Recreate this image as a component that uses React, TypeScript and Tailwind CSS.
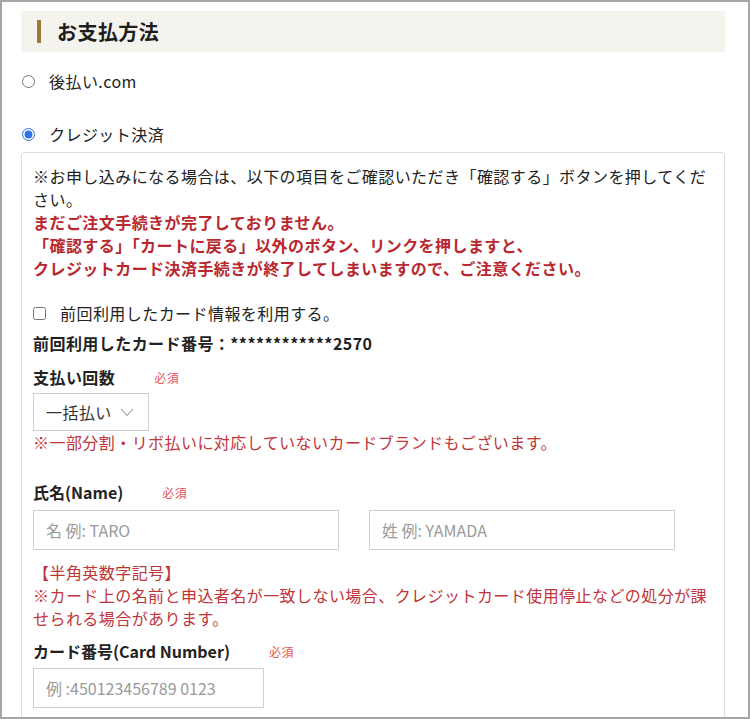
import React from "react";

const font = { fontFamily: '"Noto Sans CJK JP", "Noto Sans", sans-serif' };

function Required({ ml }: { ml: string }) {
  return <span className={`${ml} text-[12px] leading-none text-[#e0555a]`}>必須</span>;
}

export default function App() {
  return (
    <div
      className="w-[750px] h-[719px] overflow-hidden border-2 border-[#a6a6a6] bg-white text-[#222] tracking-[0.44px]"
      style={font}
    >
      <div className="pl-[19px] pr-[23px]">
        <div className="mt-[9px] h-[41px] bg-[#f5f3ee] flex items-center">
          <div className="ml-[16px] w-[4px] h-[23px] bg-[#9a7a36]" />
          <div className="ml-[16px] text-[20px] font-bold leading-none text-[#1e1e1e]">お支払方法</div>
        </div>

        <label className="mt-[17px] h-[24px] flex items-center">
          <input type="radio" name="pay" className="m-0 ml-[1px] w-[13px] h-[13px] accent-[#2f72ea]" />
          <span className="ml-[14px] text-[16px] leading-[24px]">後払い.com</span>
        </label>

        <label className="mt-[29px] h-[24px] flex items-center">
          <input type="radio" name="pay" defaultChecked className="m-0 ml-[1px] w-[13px] h-[13px] accent-[#2f72ea]" />
          <span className="ml-[14px] text-[16px] leading-[24px]">クレジット決済</span>
        </label>

        <div className="mt-[6px] h-[600px] border border-[#dcdcdc] rounded-[3px] px-[11px] pt-[12px]">
          <p className="text-[16px] leading-[23px] text-[#222]">
            ※お申し込みになる場合は、以下の項目をご確認いただき「確認する」ボタンを押してください。
          </p>
          <p className="text-[16px] leading-[23px] font-bold text-[#b8282e]">
            まだご注文手続きが完了しておりません。
            <br />
            「確認する」「カートに戻る」以外のボタン、リンクを押しますと、
            <br />
            クレジットカード決済手続きが終了してしまいますので、ご注意ください。
          </p>

          <label className="mt-[22px] h-[23px] flex items-center">
            <input type="checkbox" className="m-0 w-[13px] h-[13px]" />
            <span className="ml-[14px] text-[16px] leading-[23px]">前回利用したカード情報を利用する。</span>
          </label>

          <div className="mt-[7px] text-[16px] leading-[23px] font-bold">
            前回利用したカード番号：************2570
          </div>

          <div className="mt-[11px] h-[23px] flex items-center">
            <span className="text-[16px] font-bold leading-[23px]">支払い回数</span>
            <Required ml="ml-[39px]" />
          </div>

          <div className="mt-[4px] w-[116px] h-[38px] border border-[#cfcfcf] flex items-center pl-[12px]">
            <span className="text-[16px] leading-none text-[#333]">一括払い</span>
            <svg className="ml-[8px]" width="14" height="9" viewBox="0 0 14 9">
              <polyline points="1,1 7,7.5 13,1" fill="none" stroke="#9a9a9a" strokeWidth="1.1" />
            </svg>
          </div>

          <div className="text-[16px] leading-[23px] text-[#c0343a]">
            ※一部分割・リボ払いに対応していないカードブランドもございます。
          </div>

          <div className="mt-[27px] h-[23px] flex items-center">
            <span className="text-[16px] font-bold leading-[23px] tracking-normal">氏名(Name)</span>
            <Required ml="ml-[39px]" />
          </div>

          <div className="mt-[6px] flex gap-[30px]">
            <div className="w-[306px] h-[40px] border border-[#cfcfcf] flex items-center pl-[12px] text-[16px] text-[#9a9a9a] tracking-normal">
              名 例: TARO
            </div>
            <div className="w-[306px] h-[40px] border border-[#cfcfcf] flex items-center pl-[12px] text-[16px] text-[#9a9a9a] tracking-normal">
              姓 例: YAMADA
            </div>
          </div>

          <p className="mt-[11px] text-[16px] leading-[23px] text-[#c0343a]">
            【半角英数字記号】
            <br />
            ※カード上の名前と申込者名が一致しない場合、クレジットカード使用停止などの処分が課せられる場合があります。
          </p>

          <div className="mt-[10px] h-[23px] flex items-center">
            <span className="text-[16px] font-bold leading-[23px] tracking-normal">カード番号(Card Number)</span>
            <Required ml="ml-[39px]" />
          </div>

          <div className="mt-[5px] w-[231px] h-[40px] border border-[#cfcfcf] flex items-center pl-[12px] text-[16px] text-[#9a9a9a] tracking-normal">
            例 :450123456789 0123
          </div>
        </div>
      </div>
    </div>
  );
}
